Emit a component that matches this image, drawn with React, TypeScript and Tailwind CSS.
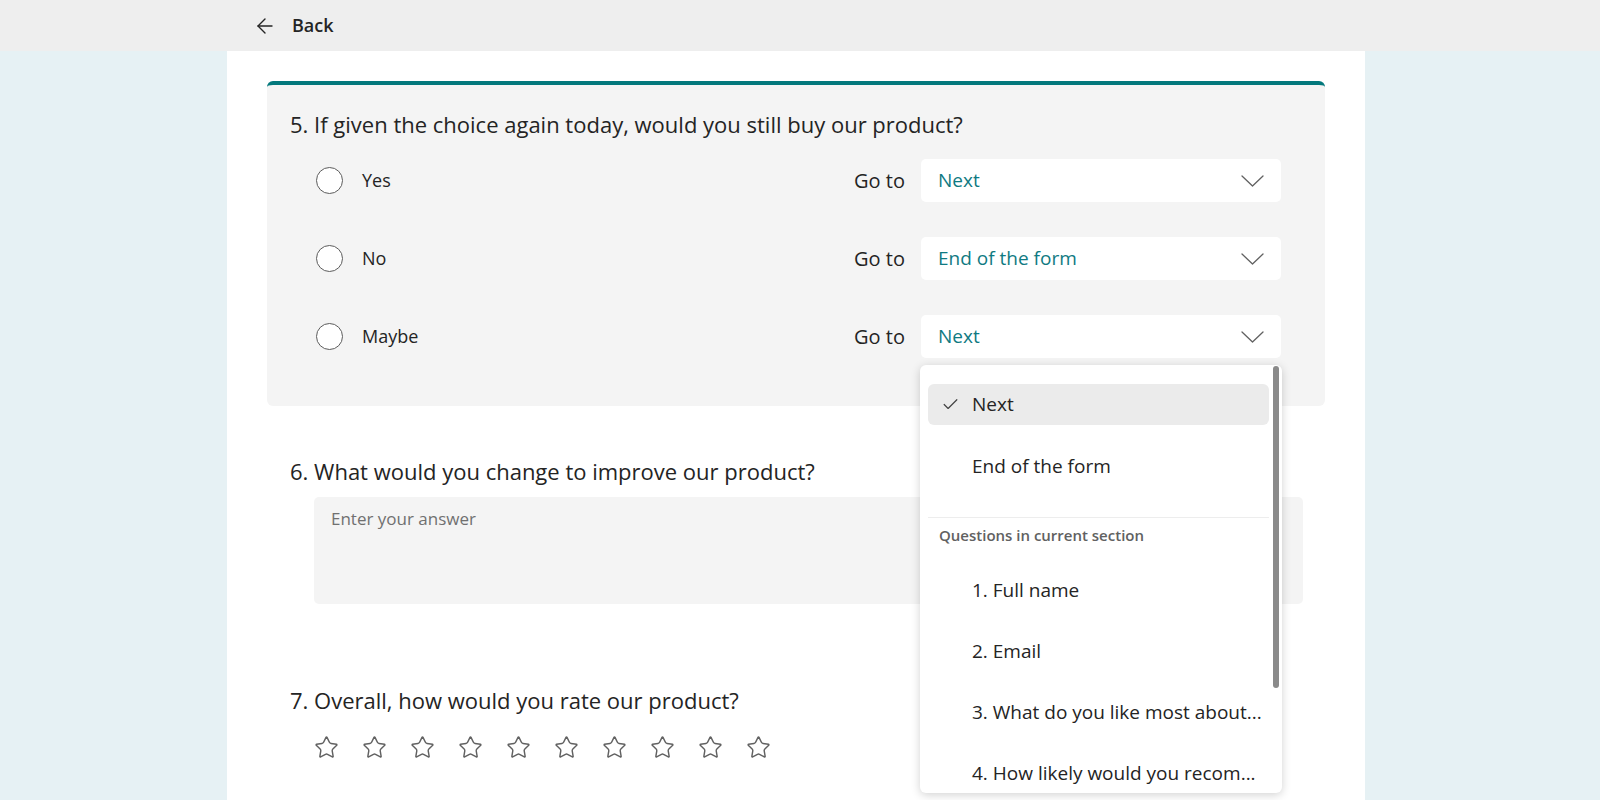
import { ArrowLeft, Star, Check } from "lucide-react";

const font = { fontFamily: '"Segoe UI", "Open Sans", "Noto Sans", sans-serif' };

function Chevron() {
  return (
    <svg width="23" height="12" viewBox="0 0 23 12" fill="none" className="text-[#616161]">
      <path d="M1 1l10.5 10L22 1" stroke="currentColor" strokeWidth="1.3" strokeLinecap="round" strokeLinejoin="round" />
    </svg>
  );
}

function Radio() {
  return <span className="h-[27px] w-[27px] shrink-0 rounded-full border-[1.5px] border-[#5c5c5c] bg-white" />;
}

function GoToMenu() {
  const questions = ["1. Full name", "2. Email", "3. What do you like most about...", "4. How likely would you recom..."];
  return (
    <div className="absolute left-[-1px] top-[calc(100%+7px)] z-10 h-[428px] w-[362px] overflow-hidden rounded-md bg-white shadow-[0_2px_10px_rgba(0,0,0,0.18)]">
      <div className="flex flex-col pl-2 pr-[13px] pt-[19px]">
        <div className="flex h-[41px] items-center rounded-md bg-[#ebebeb] pl-[13px] text-[19px] text-[#242424]">
          <Check className="h-[19px] w-[19px] text-[#424242]" strokeWidth={1.5} />
          <span className="ml-[12px]">Next</span>
        </div>
        <div className="mt-[21px] flex h-[41px] items-center pl-[44px] text-[19px] text-[#242424]">End of the form</div>
        <div className="mt-[30px] h-px bg-[#ededed]" />
        <div className="mt-[7px] pl-[11px] text-[15px] leading-[20px] font-semibold text-[#616161]">Questions in current section</div>
        <div className="mt-[15px] flex flex-col">
          {questions.map((q) => (
            <div key={q} className="flex h-[61px] items-center pl-[44px] text-[19px] text-[#242424] whitespace-nowrap">
              {q}
            </div>
          ))}
        </div>
      </div>
      <div className="absolute right-[3px] top-[1px] h-[322px] w-[6px] rounded-full bg-[#8a8a8a]" />
    </div>
  );
}

function Option({ label, target, open }: { label: string; target: string; open?: boolean }) {
  return (
    <div className="flex h-[43px] items-center">
      <div className="flex flex-1 items-center pl-[26px]">
        <Radio />
        <span className="ml-[19px] text-[18px] text-[#242424]">{label}</span>
      </div>
      <span className="mr-4 text-[20px] text-[#242424]">Go to</span>
      <div className="relative">
        <div className="flex h-[43px] w-[360px] items-center justify-between rounded-[5px] bg-white pl-[17px] pr-[17px]">
          <span className="text-[19px] text-[#0f7a82]">{target}</span>
          <Chevron />
        </div>
        {open && <GoToMenu />}
      </div>
    </div>
  );
}

export default function App() {
  return (
    <div className="min-h-screen bg-[#e6f1f4]" style={font}>
      <header className="flex h-[51px] items-center bg-[#eeeeee] pl-[253px]">
        <ArrowLeft className="h-[24px] w-[24px] text-[#242424]" strokeWidth={1.4} />
        <span className="ml-[15px] text-[18px] font-semibold text-[#242424]">Back</span>
      </header>
      <main className="ml-[227px] min-h-[749px] w-[1138px] bg-white px-10 pt-[30px]">
        <section className="rounded-md border-t-4 border-[#03787c] bg-[#f4f4f4] pl-[23px] pr-[44px] pb-[48px] pt-[24px]">
          <h2 className="text-[22px] leading-[30px] text-[#242424]">
            5. If given the choice again today, would you still buy our product?
          </h2>
          <div className="mt-[20px] flex flex-col gap-[35px]">
            <Option label="Yes" target="Next" />
            <Option label="No" target="End of the form" />
            <Option label="Maybe" target="Next" open />
          </div>
        </section>

        <section className="mt-[50px] pl-[23px] pr-[22px]">
          <h2 className="text-[22px] leading-[30px] text-[#242424]">6. What would you change to improve our product?</h2>
          <div className="ml-[24px] mt-[11px] h-[107px] rounded-[5px] bg-[#f4f4f4] px-[17px] pt-[10px] text-[17px] leading-[24px] text-[#707070]">
            Enter your answer
          </div>
        </section>

        <section className="mt-[81px] pl-[23px]">
          <h2 className="text-[22px] leading-[30px] text-[#242424]">7. Overall, how would you rate our product?</h2>
          <div className="ml-[24px] mt-[20px] flex gap-[23px]">
            {Array.from({ length: 10 }).map((_, i) => (
              <Star key={i} className="h-[25px] w-[25px] text-[#616161]" strokeWidth={1.4} />
            ))}
          </div>
        </section>
      </main>
    </div>
  );
}
